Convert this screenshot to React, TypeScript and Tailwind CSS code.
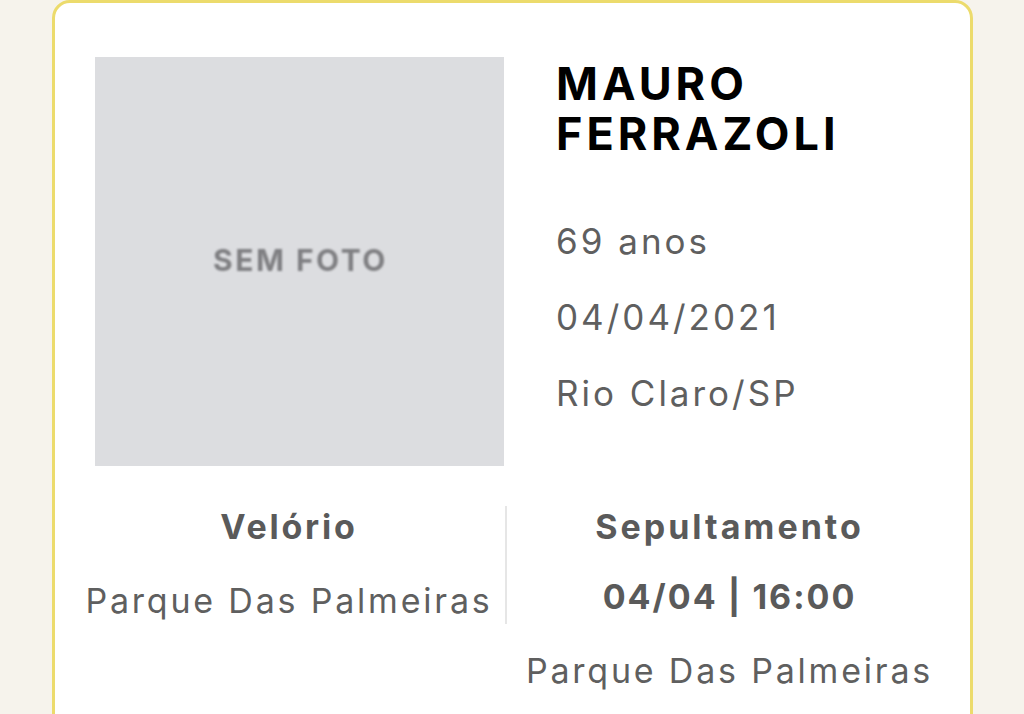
import React from "react";

const font = { fontFamily: "Inter, 'Open Sans', sans-serif" };

export default function App() {
  return (
    <div className="w-[1024px] h-[714px] overflow-hidden bg-[#f6f3ec]" style={font}>
      <div className="ml-[52px] w-[921px] h-[760px] rounded-[18px] border-[3px] border-[#ecdb6c] bg-white">
        <div className="flex pl-[40px] pt-[54px]">
          <div className="w-[409px] h-[409px] bg-[#dcdde0] flex items-center justify-center">
            <span className="pl-[2px] pb-[2px] text-[30px] font-bold text-[#7f7f82] blur-[0.8px] tracking-[2.5px]">SEM FOTO</span>
          </div>
          <div className="ml-[52px] pt-[2px]">
            <h1 className="text-[45px] leading-[50px] font-bold text-black tracking-[4px]">
              MAURO
              <br />
              FERRAZOLI
            </h1>
            <div className="mt-[63px] flex flex-col gap-[38px] text-[35px] leading-[38px] text-[#5f5f5f] tracking-[3px]">
              <span>69 anos</span>
              <span>04/04/2021</span>
              <span>Rio Claro/SP</span>
            </div>
          </div>
        </div>
        <div className="flex mt-[40px] px-[18px]">
          <div className="w-[434px] flex flex-col items-center pt-[2px] pb-[2px] border-r-2 border-[#e6e6e6] h-[118px]">
            <span className="text-[34px] leading-[38px] font-bold text-[#5a5a5a] tracking-[2.8px]">Velório</span>
            <span className="mt-[36px] text-[34px] leading-[38px] text-[#5f5f5f] tracking-[2.8px]">Parque Das Palmeiras</span>
          </div>
          <div className="flex-1 flex flex-col items-center pt-[2px]">
            <span className="text-[34px] leading-[38px] font-bold text-[#5a5a5a] tracking-[3px]">Sepultamento</span>
            <span className="mt-[32px] text-[34px] leading-[38px] font-bold text-[#5a5a5a] tracking-[2px]">04/04 | 16:00</span>
            <span className="mt-[36px] text-[34px] leading-[38px] text-[#5f5f5f] tracking-[2.8px]">Parque Das Palmeiras</span>
          </div>
        </div>
      </div>
    </div>
  );
}
